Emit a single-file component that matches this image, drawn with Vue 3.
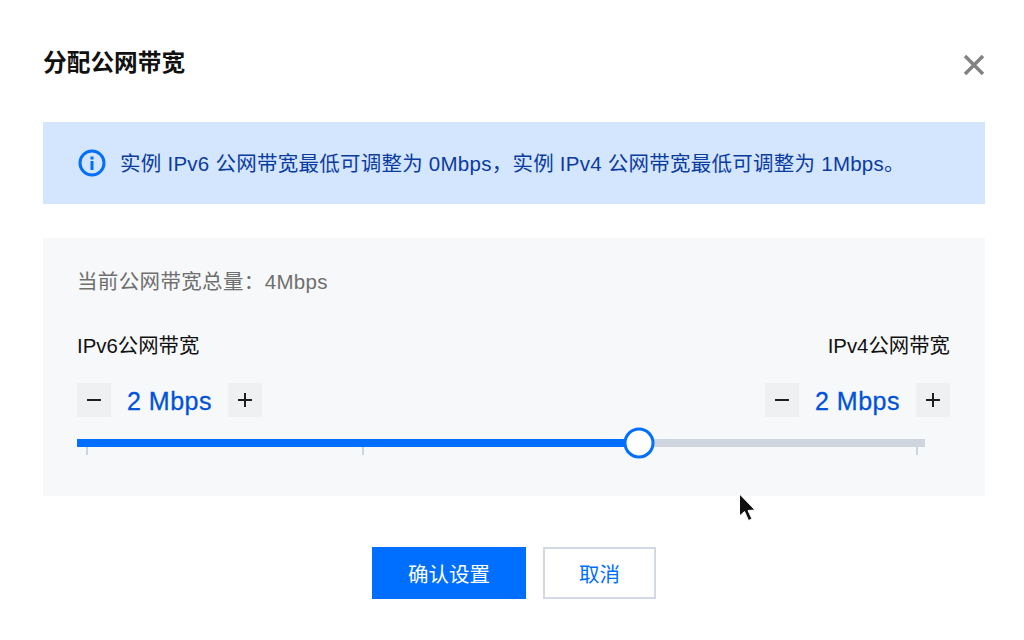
<template>
  <div class="dialog">
    <div class="header">
      <h2 class="title">分配公网带宽</h2>
      <svg class="close" width="22" height="22" viewBox="0 0 22 22">
        <path d="M2 2 L20 20 M20 2 L2 20" stroke="#828282" stroke-width="3.4" fill="none" />
      </svg>
    </div>

    <div class="alert">
      <svg class="info" width="28" height="28" viewBox="0 0 28 28">
        <circle cx="14" cy="14" r="12" stroke="#006eff" stroke-width="3" fill="none" />
        <rect x="12.5" y="7.5" width="3" height="3" fill="#006eff" />
        <rect x="12.5" y="12" width="3" height="9" fill="#006eff" />
      </svg>
      <span class="alert-text">实例 IPv6 公网带宽最低可调整为 0Mbps，实例 IPv4 公网带宽最低可调整为 1Mbps。</span>
    </div>

    <div class="panel">
      <div class="total">当前公网带宽总量：4Mbps</div>
      <div class="sides">
        <div v-for="side in sides" :key="side.label" :class="['side', side.align]">
          <div class="label">{{ side.label }}</div>
          <div class="stepper">
            <button class="step">
              <svg width="16" height="16" viewBox="0 0 16 16"><path d="M1 8 H15" stroke="#1f1f1f" stroke-width="2" /></svg>
            </button>
            <span class="value">{{ side.value }} Mbps</span>
            <button class="step">
              <svg width="16" height="16" viewBox="0 0 16 16"><path d="M1 8 H15 M8 1 V15" stroke="#1f1f1f" stroke-width="2" /></svg>
            </button>
          </div>
        </div>
      </div>
      <div class="slider">
        <div class="track">
          <div class="fill" :style="{ width: percent + '%' }"></div>
          <div class="handle" :style="{ left: percent + '%' }"></div>
        </div>
        <div class="ticks">
          <i v-for="n in 3" :key="n" :class="['tick', 'tick' + n]"></i>
        </div>
      </div>
    </div>

    <div class="footer">
      <button class="btn primary">确认设置</button>
      <button class="btn">取消</button>
    </div>

    <svg class="cursor" width="20" height="32" viewBox="0 0 20 32">
      <path d="M1.5 1 V23 L6.5 18.5 L10.5 27.5 L14 26 L10 17.5 L17 17 Z" fill="#111" stroke="#fff" stroke-width="1" />
    </svg>
  </div>
</template>

<script setup>
const percent = 66.3;

const sides = [
  { label: 'IPv6公网带宽', value: 2, align: 'left' },
  { label: 'IPv4公网带宽', value: 2, align: 'right' }
];
</script>

<style scoped>
.dialog {
  position: relative;
  width: 1024px;
  height: 640px;
  box-sizing: border-box;
  padding: 0 39px 0 43px;
  background: #fff;
  overflow: hidden;
  font-family: "Liberation Sans", "Noto Sans CJK SC", sans-serif;
}

.header {
  display: flex;
  align-items: center;
  justify-content: space-between;
  height: 122px;
}

.title {
  margin: 3px 0 0 0;
  font-size: 23.7px;
  line-height: 32px;
  font-weight: 700;
  color: #111;
}

.close {
  margin-top: 8px;
}

.alert {
  display: flex;
  align-items: center;
  gap: 14px;
  height: 82px;
  padding-left: 35px;
  background: #d4e5fe;
  color: #0a3ca0;
  font-size: 20.5px;
  letter-spacing: 0.25px;
}

.alert-text {
  margin-bottom: 3px;
}

.info {
  flex: none;
}

.panel {
  margin-top: 34px;
  height: 258px;
  box-sizing: border-box;
  padding: 30px 35px 0 34px;
  background: #f7f8fa;
}

.total {
  font-size: 20.5px;
  letter-spacing: 0.35px;
  line-height: 28px;
  color: #6f6f6f;
}

.sides {
  display: flex;
  justify-content: space-between;
  margin-top: 36px;
}

.side {
  display: flex;
  flex-direction: column;
}

.side.right {
  align-items: flex-end;
}

.label {
  font-size: 20.4px;
  line-height: 28px;
  color: #111;
}

.stepper {
  display: flex;
  align-items: center;
  margin-top: 23px;
}

.step {
  display: flex;
  align-items: center;
  justify-content: center;
  width: 34px;
  height: 34px;
  padding: 0;
  border: 0;
  background: #eff0f2;
}

.value {
  width: 117px;
  padding-top: 2px;
  text-align: center;
  font-size: 25px;
  letter-spacing: 0.5px;
  -webkit-text-stroke: 0.3px #0052d9;
  color: #0052d9;
}

.slider {
  margin-top: 22px;
  width: 848px;
}

.track {
  position: relative;
  height: 8px;
  background: #cfd5de;
}

.fill {
  height: 100%;
  background: #006eff;
}

.handle {
  position: absolute;
  top: 4px;
  width: 31px;
  height: 31px;
  box-sizing: border-box;
  border: 3px solid #006eff;
  border-radius: 50%;
  background: #fff;
  transform: translate(-50%, -50%);
}

.ticks {
  position: relative;
  height: 8px;
}

.tick {
  position: absolute;
  top: 0;
  width: 2px;
  height: 8px;
  background: #cfd5de;
}

.tick1 { left: 9px; }
.tick2 { left: 285px; }
.tick3 { left: 839px; }

.footer {
  display: flex;
  justify-content: center;
  gap: 17px;
  margin-top: 51px;
}

.btn {
  width: 113px;
  height: 52px;
  box-sizing: border-box;
  padding: 0;
  border: 2px solid #d3d9e4;
  background: #fff;
  color: #006eff;
  font-family: inherit;
  font-size: 20.5px;
}

.btn.primary {
  width: 154px;
  border: 0;
  background: #006eff;
  color: #fff;
}

.cursor {
  position: absolute;
  left: 738px;
  top: 493px;
}
</style>
